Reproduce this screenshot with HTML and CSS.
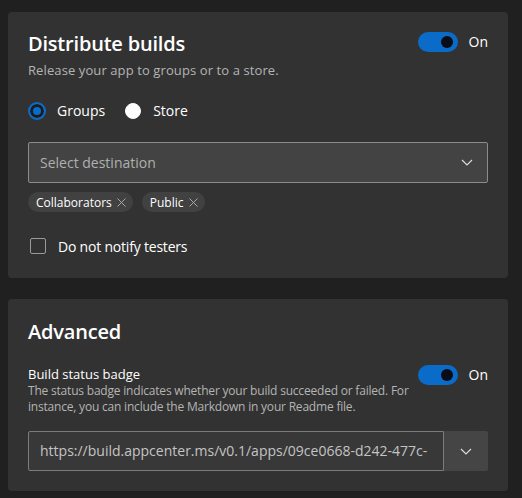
FILE: index.html
```html
<!DOCTYPE html>
<html>
<head>
<meta charset="utf-8">
<link rel="stylesheet" href="styles.css">
</head>
<body>
<div class="page">
  <section class="card card-distribute">
    <div class="title-row">
      <h2 class="card-title">Distribute builds</h2>
      <div class="toggle-wrap">
        <span class="toggle"><span class="knob"></span></span>
        <span class="toggle-label">On</span>
      </div>
    </div>
    <p class="subtitle">Release your app to groups or to a store.</p>
    <div class="radio-row">
      <label class="radio"><span class="radio-dot checked"></span><span>Groups</span></label>
      <label class="radio"><span class="radio-dot"></span><span>Store</span></label>
    </div>
    <div class="select">
      <span class="placeholder">Select destination</span>
      <svg class="chevron" width="12" height="7" viewBox="0 0 12 7"><path d="M1 1 L6 6 L11 1" fill="none" stroke="#dcdcdc" stroke-width="1.2"/></svg>
    </div>
    <div class="chips">
      <span class="chip">Collaborators<svg class="chip-x" width="9" height="9" viewBox="0 0 9 9"><path d="M0.5 0.5 L8.5 8.5 M8.5 0.5 L0.5 8.5" stroke="#a8a8a8" stroke-width="1"/></svg></span>
      <span class="chip">Public<svg class="chip-x" width="9" height="9" viewBox="0 0 9 9"><path d="M0.5 0.5 L8.5 8.5 M8.5 0.5 L0.5 8.5" stroke="#a8a8a8" stroke-width="1"/></svg></span>
    </div>
    <label class="checkbox-row"><span class="checkbox"></span><span>Do not notify testers</span></label>
  </section>

  <section class="card card-advanced">
    <h2 class="card-title">Advanced</h2>
    <div class="badge-row">
      <span class="badge-label">Build status badge</span>
      <div class="toggle-wrap">
        <span class="toggle"><span class="knob"></span></span>
        <span class="toggle-label">On</span>
      </div>
    </div>
    <p class="desc">The status badge indicates whether your build succeeded or failed. For<br>instance, you can include the Markdown in your Readme file.</p>
    <div class="url-row">
      <div class="url-input"><span class="url-text">https://build.appcenter.ms/v0.1/apps/09ce0668-d242-477c-</span></div>
      <div class="url-btn">
        <svg width="12" height="7" viewBox="0 0 12 7"><path d="M1 1 L6 6 L11 1" fill="none" stroke="#dcdcdc" stroke-width="1.2"/></svg>
      </div>
    </div>
  </section>
</div>
</body>
</html>
```

FILE: styles.css
```css
* { box-sizing: border-box; }
html, body { margin: 0; padding: 0; }
body {
  background: #202020;
  font-family: "Open Sans", "Noto Sans", sans-serif;
  color: #ffffff;
  width: 522px;
  height: 498px;
  overflow: hidden;
}
.page {
  padding: 12px 14px 0 8px;
  display: flex;
  flex-direction: column;
  gap: 21px;
}
.card {
  background: #323232;
  border-radius: 4px;
  padding: 18px 20px 22px 20px;
  display: flex;
  flex-direction: column;
}
.card-advanced { padding-top: 19px; padding-bottom: 20px; }
.title-row {
  display: flex;
  justify-content: space-between;
  align-items: center;
  height: 28px;
}
.card-title {
  margin: 0;
  font-size: 20px;
  line-height: 28px;
  font-weight: 600;
  letter-spacing: -0.2px;
}
.toggle-wrap {
  display: flex;
  align-items: center;
  gap: 11px;
  margin-top: -4px;
}
.toggle {
  width: 40px;
  height: 20px;
  border-radius: 10px;
  background: #0a6cc8;
  display: flex;
  align-items: center;
  justify-content: flex-end;
  padding-right: 5px;
}
.knob {
  width: 12px;
  height: 12px;
  border-radius: 50%;
  background: #0b0d16;
}
.toggle-label { font-size: 14px; line-height: 20px; }
.subtitle {
  margin: 3px 0 0 0;
  font-size: 13px;
  line-height: 18px;
  color: #b4b4b4;
  letter-spacing: 0.1px;
}
.radio-row {
  margin-top: 22px;
  display: flex;
  gap: 19px;
  height: 20px;
  align-items: center;
}
.radio {
  display: flex;
  align-items: center;
  gap: 11px;
  font-size: 14px;
  line-height: 20px;
}
.radio-dot {
  width: 18px;
  height: 18px;
  border-radius: 50%;
  background: #ffffff;
  border: 1px solid #ffffff;
}
.radio-dot:not(.checked) {
  width: 16px;
  height: 16px;
  margin: 0 1px;
}
.radio-dot.checked {
  background: #0a6cc8;
  border: 2px solid #0a6cc8;
  box-shadow: inset 0 0 0 3px #1c1c1c;
}
.select {
  margin-top: 21px;
  height: 41px;
  border: 1px solid #8c8c8c;
  border-radius: 2px;
  background: #434343;
  display: flex;
  align-items: center;
  justify-content: space-between;
  padding: 0 14px 0 11px;
}
.placeholder {
  font-size: 14px;
  color: #b0b0b0;
}
.chips {
  margin-top: 9px;
  display: flex;
  gap: 9px;
}
.chip {
  height: 20px;
  border-radius: 10px;
  background: #414141;
  display: flex;
  align-items: center;
  gap: 5px;
  padding: 0 7px 0 8px;
  font-size: 12px;
}
.chip-x { display: block; }
.checkbox-row {
  margin-top: 24px;
  display: flex;
  align-items: center;
  gap: 12px;
  height: 20px;
  font-size: 14px;
  letter-spacing: -0.2px;
  padding-left: 2px;
}
.checkbox {
  width: 16px;
  height: 16px;
  border: 1px solid #9a9a9a;
  border-radius: 2px;
}
.badge-row {
  margin-top: 19px;
  height: 18px;
  display: flex;
  justify-content: space-between;
  align-items: center;
}
.badge-row .toggle-wrap { margin-top: 2px; }
.badge-label {
  font-size: 13px;
  line-height: 18px;
}
.desc {
  margin: 0;
  font-size: 12px;
  line-height: 16px;
  color: #b4b4b4;
  letter-spacing: -0.2px;
}
.url-row {
  margin-top: 16px;
  display: flex;
  height: 40px;
}
.url-input {
  flex: 1;
  min-width: 0;
  border: 1px solid #7c7c7c;
  border-radius: 2px 0 0 2px;
  background: #383838;
  font-size: 14px;
  line-height: 38px;
  color: #c4c4c4;
  padding-left: 11px;
  white-space: nowrap;
  overflow: hidden;
}
.url-btn {
  width: 44px;
  background: #454545;
  border-radius: 0 2px 2px 0;
  display: flex;
  align-items: center;
  justify-content: center;
}
.url-btn svg { display: block; }
```
